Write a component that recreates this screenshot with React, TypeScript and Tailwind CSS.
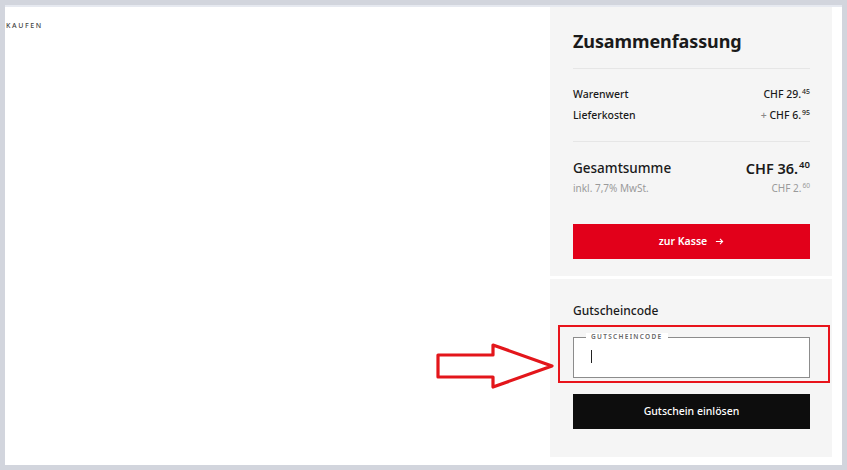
import React from "react";

const Price = ({ main, cents, className = "" }: { main: string; cents: string; className?: string }) => (
  <span className={className}>
    {main}
    <sup className="text-[0.66em] relative -top-[0.6em] ml-[1px]">{cents}</sup>
  </span>
);

const RedArrow = () => (
  <svg
    className="absolute left-[430px] top-[335px]"
    width="122"
    height="48"
    viewBox="0 0 122 48"
  >
    <path
      d="M3 13 H58 V3 L117 24 L58 45 V35 H3 Z"
      fill="white"
      stroke="#e3161b"
      strokeWidth="3.2"
      strokeLinejoin="round"
    />
  </svg>
);

export default function App() {
  return (
    <div
      className="w-[847px] h-[470px] bg-[#d2d5dd] p-[5px] text-[#1a1a1a]"
      style={{ fontFamily: '"Noto Sans", "Open Sans", sans-serif' }}
    >
      <div className="relative flex h-[460px] bg-white border-t-[2px] border-[#e6e9f0]">
        <div className="flex-1 pt-[14px] pl-[1px]">
          <div className="text-[7px] tracking-[1.6px] text-[#444] font-medium">KAUFEN</div>
        </div>

        <div className="w-[282px] mr-[10px] flex flex-col gap-[3px]">
          {/* Zusammenfassung */}
          <div className="bg-[#f5f5f5] px-[23px] pr-[22px] pt-[22px] pb-[17px] flex flex-col">
            <h2 className="text-[18px] leading-[24px] font-bold tracking-[-0.1px]">Zusammenfassung</h2>
            <div className="mt-[15px] h-px bg-[#e6e6e6]" />
            <div className="mt-[15px] flex flex-col text-[10.5px] leading-[21px] font-medium">
              <div className="flex justify-between">
                <span>Warenwert</span>
                <Price main="CHF 29." cents="45" />
              </div>
              <div className="flex justify-between">
                <span>Lieferkosten</span>
                <span>
                  <span className="text-[#888]">+ </span>
                  <Price main="CHF 6." cents="95" />
                </span>
              </div>
            </div>
            <div className="mt-[15px] h-px bg-[#e6e6e6]" />
            <div className="mt-[16px] flex justify-between items-end text-[13.5px] leading-[20px]">
              <span className="font-medium">Gesamtsumme</span>
              <Price main="CHF 36." cents="40" className="font-semibold text-[14.5px]" />
            </div>
            <div className="mt-[2px] flex justify-between text-[10px] leading-[16px] text-[#9a9a9a]">
              <span>inkl. 7,7% MwSt.</span>
              <Price main="CHF 2." cents="60" />
            </div>
            <button className="mt-[28px] h-[35px] bg-[#e2001a] text-white text-[10.5px] font-semibold flex items-center justify-center gap-[8px]">
              zur Kasse
              <svg width="9" height="9" viewBox="0 0 10 10" fill="none" stroke="white" strokeWidth="1.2">
                <path d="M1 5 H8.5 M5.5 2 L8.5 5 L5.5 8" />
              </svg>
            </button>
          </div>

          {/* Gutschein */}
          <div className="relative bg-[#f5f5f5] pl-[23px] pr-[22px] pt-[24px] pb-[28px] flex flex-col">
            <div className="text-[12px] leading-[16px] font-medium">Gutscheincode</div>
            <div className="relative mt-[18px] h-[41px] bg-white border border-[#8c8c8c]">
              <span className="absolute -top-[5px] left-[12px] bg-white px-[5px] text-[6.5px] leading-[8px] tracking-[1.3px] text-[#666] font-semibold">
                GUTSCHEINCODE
              </span>
              <span className="absolute left-[17px] top-[12px] w-px h-[13px] bg-[#222]" />
            </div>
            <button className="mt-[16px] h-[35px] bg-[#0d0d0d] text-white text-[10.5px] font-medium flex items-center justify-center">
              Gutschein einlösen
            </button>
            <div className="absolute left-[8px] top-[46px] w-[272px] h-[58px] border-[2px] border-[#e8141b]" />
          </div>
        </div>

        <RedArrow />
      </div>
    </div>
  );
}
